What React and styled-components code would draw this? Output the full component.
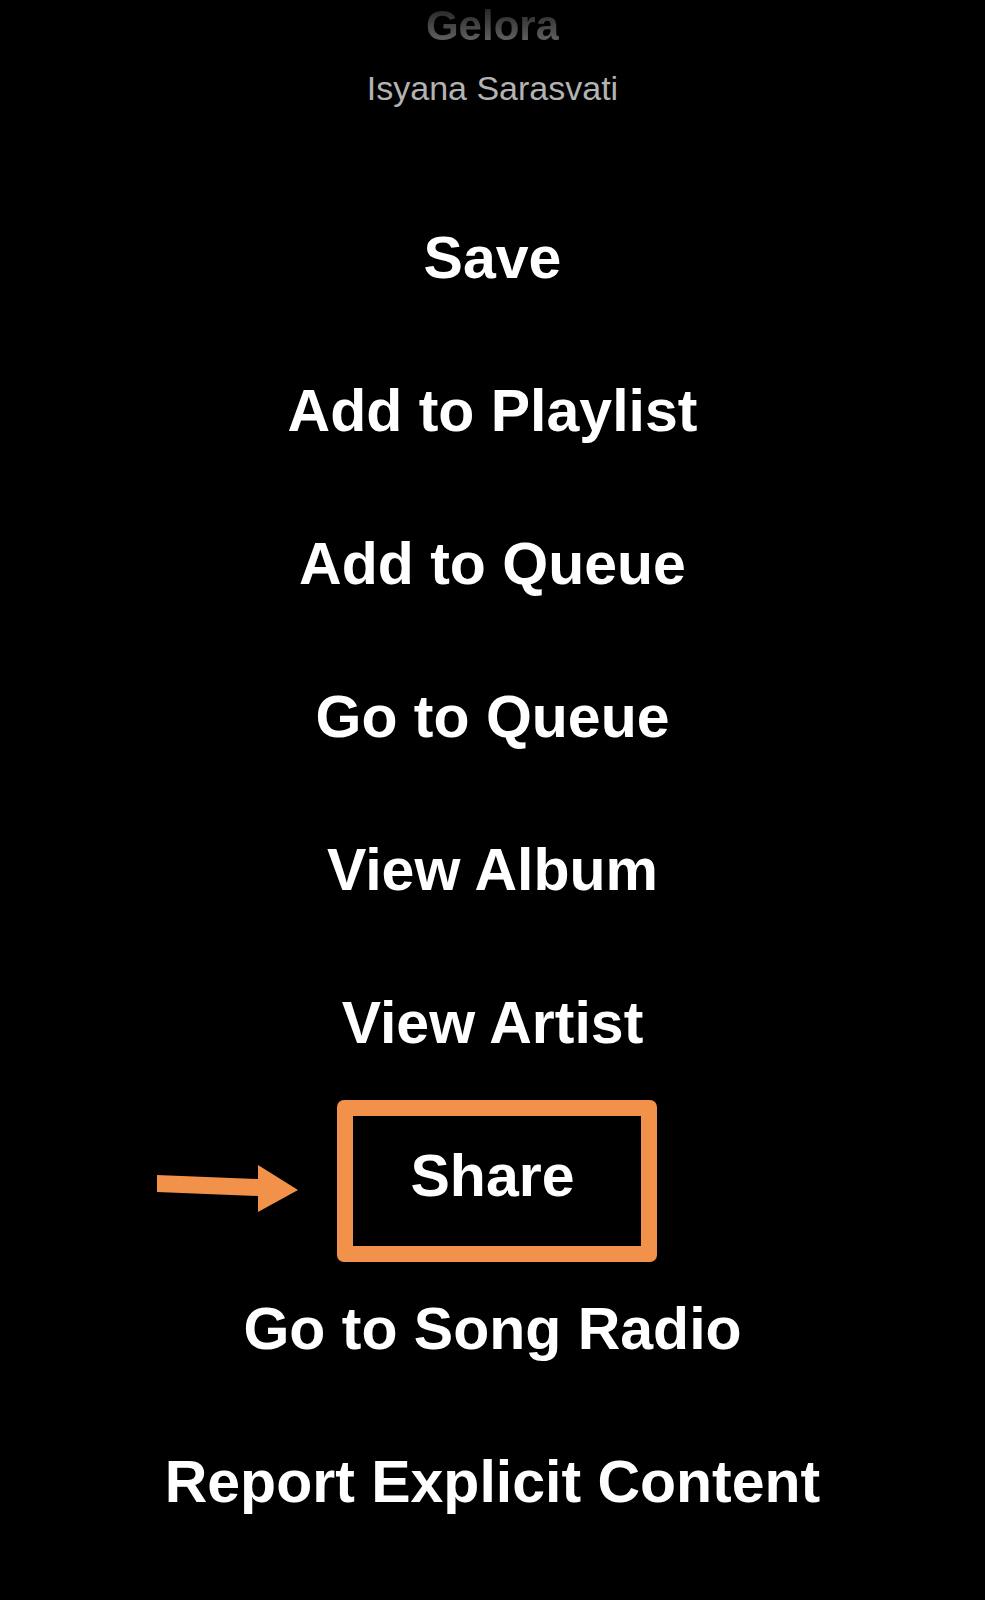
import styled, { createGlobalStyle } from 'styled-components';

const GlobalStyle = createGlobalStyle`
  html, body {
    margin: 0;
    padding: 0;
    background: #000;
  }
`;

const Screen = styled.div`
  display: flex;
  flex-direction: column;
  align-items: center;
  width: 100%;
  min-height: 1600px;
  background: #000;
  font-family: "Liberation Sans", Arial, sans-serif;
  overflow: hidden;
`;

const Header = styled.div`
  display: flex;
  flex-direction: column;
  align-items: center;
  gap: 22px;
  padding-top: 6px;
`;

const SongTitle = styled.div`
  font-size: 42px;
  line-height: 40px;
  font-weight: 700;
  background: linear-gradient(180deg, #222 0%, #464646 50%, #6a6a6a 100%);
  -webkit-background-clip: text;
  background-clip: text;
  color: transparent;
`;

const Artist = styled.div`
  font-size: 34px;
  line-height: 40px;
  color: #b3b3b3;
`;

const Menu = styled.ul`
  list-style: none;
  margin: 74px 0 0;
  padding: 0;
  display: flex;
  flex-direction: column;
  align-items: center;
  width: 100%;
`;

const MenuItem = styled.li`
  display: flex;
  align-items: center;
  justify-content: center;
  height: 153px;
  color: #fff;
  font-size: 59px;
  font-weight: 700;
  line-height: 1;
  white-space: nowrap;
`;

const Highlight = styled.div`
  position: relative;
  box-sizing: border-box;
  display: flex;
  align-items: center;
  justify-content: center;
  width: 320px;
  height: 162px;
  margin: 9px 0 0 8px;
  padding: 0 8px 10px 0;
  border: 16px solid #f29149;
  border-radius: 7px;
`;

const Pointer = styled.svg`
  position: absolute;
  left: -199px;
  top: 49px;
`;

const items = [
  'Save',
  'Add to Playlist',
  'Add to Queue',
  'Go to Queue',
  'View Album',
  'View Artist',
  'Share',
  'Go to Song Radio',
  'Report Explicit Content',
];

const App = () => {
  return (
    <Screen>
      <GlobalStyle />
      <Header>
        <SongTitle>Gelora</SongTitle>
        <Artist>Isyana Sarasvati</Artist>
      </Header>
      <Menu>
        {items.map((label) => (
          <MenuItem key={label}>
            {label === 'Share' ? (
              <Highlight>
                <Pointer width="144" height="47" viewBox="0 0 144 47">
                  <polygon
                    points="3,10 104,14 104,0 144,25 104,47 104,31 3,27"
                    fill="#f29149"
                  />
                </Pointer>
                {label}
              </Highlight>
            ) : (
              label
            )}
          </MenuItem>
        ))}
      </Menu>
    </Screen>
  );
};

export default App;
